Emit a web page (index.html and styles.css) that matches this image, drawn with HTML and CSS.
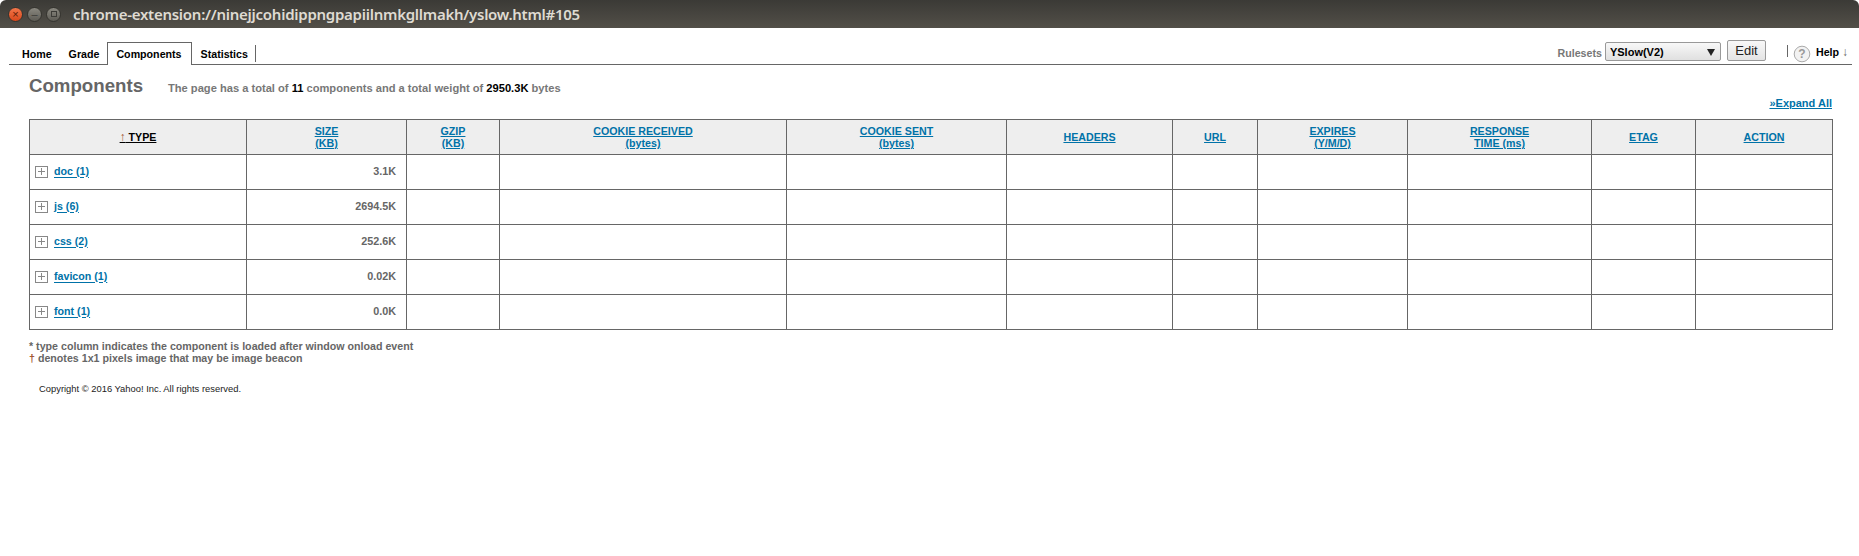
FILE: index.html
```html
<!DOCTYPE html>
<html lang="en">

<head>
    <meta charset="UTF-8">
    <link rel="stylesheet" href="styles.css">
    <title>YSlow</title>
</head>

<body>
    <header class="titlebar">
        <div class="win-buttons">
            <span class="win-btn win-close">×</span>
            <span class="win-btn win-min">–</span>
            <span class="win-btn win-max"><span class="max-box"></span></span>
        </div>
        <div class="win-title">chrome-extension://ninejjcohidippngpapiilnmkgllmakh/yslow.html#105</div>
    </header>

    <nav class="toolbar">
        <ul class="tabs">
            <li class="tab tab-home">Home</li>
            <li class="tab tab-grade">Grade</li>
            <li class="tab tab-active">Components</li>
            <li class="tab tab-last">Statistics</li>
        </ul>
        <div class="tools">
            <span class="rulesets-label">Rulesets</span>
            <div class="select-wrap">
                <select class="rulesets">
                    <option>YSlow(V2)</option>
                </select>
            </div>
            <button class="edit-btn" type="button">Edit</button>
            <span class="tools-sep"></span>
            <svg class="help-icon" width="18" height="18" viewBox="0 0 18 18">
                <circle cx="9" cy="9" r="7.8" fill="#f2f2f2" stroke="#aaa" stroke-width="1"></circle>
                <text x="9" y="13" text-anchor="middle" class="help-q">?</text>
            </svg>
            <span class="help-text">Help <span class="help-arrow">↓</span></span>
        </div>
    </nav>

    <main class="content">
        <div class="summary">
            <h1>Components</h1>
            <p>The page has a total of <b>11</b> components and a total weight of <b>2950.3K</b> bytes</p>
        </div>
        <div class="expand-row"><a href="#">»Expand All</a></div>

        <table class="components">
            <colgroup>
                <col class="c-type"><col class="c-size"><col class="c-gzip"><col class="c-crecv">
                <col class="c-csent"><col class="c-headers"><col class="c-url"><col class="c-expires">
                <col class="c-resp"><col class="c-etag"><col class="c-action">
            </colgroup>
            <thead>
                <tr>
                    <th><a href="#" class="sorted"><span class="sort-arrow">↑</span> TYPE</a></th>
                    <th><a href="#">SIZE<br>(KB)</a></th>
                    <th><a href="#">GZIP<br>(KB)</a></th>
                    <th><a href="#">COOKIE RECEIVED<br>(bytes)</a></th>
                    <th><a href="#">COOKIE SENT<br>(bytes)</a></th>
                    <th><a href="#">HEADERS</a></th>
                    <th><a href="#">URL</a></th>
                    <th><a href="#">EXPIRES<br>(Y/M/D)</a></th>
                    <th><a href="#">RESPONSE<br>TIME (ms)</a></th>
                    <th><a href="#">ETAG</a></th>
                    <th><a href="#">ACTION</a></th>
                </tr>
            </thead>
            <tbody>
                <tr>
                    <td class="type"><span class="plus"></span><a href="#">doc (1)</a></td>
                    <td class="size">3.1K</td>
                    <td></td><td></td><td></td><td></td><td></td><td></td><td></td><td></td><td></td>
                </tr>
                <tr>
                    <td class="type"><span class="plus"></span><a href="#">js (6)</a></td>
                    <td class="size">2694.5K</td>
                    <td></td><td></td><td></td><td></td><td></td><td></td><td></td><td></td><td></td>
                </tr>
                <tr>
                    <td class="type"><span class="plus"></span><a href="#">css (2)</a></td>
                    <td class="size">252.6K</td>
                    <td></td><td></td><td></td><td></td><td></td><td></td><td></td><td></td><td></td>
                </tr>
                <tr>
                    <td class="type"><span class="plus"></span><a href="#">favicon (1)</a></td>
                    <td class="size">0.02K</td>
                    <td></td><td></td><td></td><td></td><td></td><td></td><td></td><td></td><td></td>
                </tr>
                <tr>
                    <td class="type"><span class="plus"></span><a href="#">font (1)</a></td>
                    <td class="size">0.0K</td>
                    <td></td><td></td><td></td><td></td><td></td><td></td><td></td><td></td><td></td>
                </tr>
            </tbody>
        </table>

        <div class="notes">
            <div>* type column indicates the component is loaded after window onload event</div>
            <div><span class="dagger">†</span> denotes 1x1 pixels image that may be image beacon</div>
        </div>
        <div class="copyright">Copyright © 2016 Yahoo! Inc. All rights reserved.</div>
    </main>
</body>

</html>
```
FILE: styles.css
```css
* {
    box-sizing: border-box;
    margin: 0;
    padding: 0;
}

body {
    height: 556px;
    overflow: hidden;
    background-color: #fff;
    font-family: "Liberation Sans", Arial, sans-serif;
    font-size: 10.67px;
    color: #666;
}

a {
    color: #0072a8;
}

.titlebar {
    display: flex;
    align-items: center;
    height: 28px;
    padding-left: 8px;
    background: linear-gradient(#3b3a36, #524f48);
    border-radius: 6px 6px 0 0;
}

.win-buttons {
    display: flex;
    gap: 4px;
    width: 65px;
}

.win-btn {
    display: flex;
    justify-content: center;
    align-items: center;
    width: 15px;
    height: 15px;
    border-radius: 50%;
    font-size: 11px;
    line-height: 1;
    color: #3c3b37;
    background: linear-gradient(#8a8880, #5d5b54);
    border: 1px solid #35342f;
}

.win-close {
    background: linear-gradient(#f2764a, #d8481b);
    color: #5a1d08;
}

.max-box {
    width: 6px;
    height: 6px;
    border: 1px solid #3c3b37;
}

.win-title {
    font-family: "Noto Sans", sans-serif;
    font-size: 15px;
    font-weight: 600;
    letter-spacing: -0.26px;
    color: #dfdbd2;
}

.toolbar {
    display: flex;
    justify-content: space-between;
    height: 37px;
    margin: 0 7px 0 9px;
    border-bottom: 1px solid #666;
}

.tabs {
    display: flex;
    list-style: none;
    height: 23px;
    margin-top: 14px;
}

.tab {
    padding: 6px 9px 0 9px;
    font-weight: bold;
    color: #000;
}

.tab-home {
    padding-left: 13px;
    padding-right: 8px;
}

.tab-grade {
    padding-right: 8px;
}

.tab-active {
    height: 23px;
    background-color: #fff;
    border: 1px solid #666;
    border-bottom: none;
    padding: 5px 9px 0 8px;
}

.tab-last {
    height: 17px;
    margin-top: 3px;
    padding-top: 3px;
    border-right: 1px solid #666;
    padding-right: 7px;
}

.tools {
    display: flex;
    align-items: flex-start;
}

.rulesets-label {
    margin: 19px 3px 0 0;
    font-weight: bold;
    color: #777;
}

.select-wrap {
    position: relative;
    margin-top: 14px;
}

.select-wrap::after {
    content: "";
    position: absolute;
    top: 7px;
    right: 6px;
    border-left: 4px solid transparent;
    border-right: 4px solid transparent;
    border-top: 7px solid #222;
    pointer-events: none;
}

.rulesets {
    appearance: none;
    display: block;
    width: 116px;
    height: 19px;
    padding-left: 4px;
    border: 1px solid #999;
    border-radius: 2px;
    background: linear-gradient(#f8f8f8, #e0e0e0);
    font-family: "Liberation Sans", Arial, sans-serif;
    font-size: 11px;
    font-weight: bold;
    color: #000;
}

.edit-btn {
    width: 39px;
    height: 21px;
    margin: 12px 0 0 6px;
    border: 1px solid #999;
    border-radius: 2px;
    background: linear-gradient(#f8f8f8, #e4e4e4);
    font-family: "Liberation Sans", Arial, sans-serif;
    font-size: 13px;
    color: #222;
}

.tools-sep {
    width: 1px;
    height: 12px;
    margin: 17px 5px 0 21px;
    background-color: #666;
}

.help-icon {
    margin: 17px 5px 0 0;
}

.help-q {
    font-family: "Liberation Sans", Arial, sans-serif;
    font-size: 12px;
    font-weight: bold;
    fill: #999;
}

.help-text {
    margin: 17px 4px 0 0;
    font-weight: bold;
    color: #000;
}

.help-arrow {
    font-size: 12px;
    font-weight: normal;
    color: #666;
}

.content {
    padding: 0 27px 0 29px;
}

.summary {
    display: flex;
    align-items: baseline;
    height: 27px;
    padding-top: 10px;
}

.summary h1 {
    width: 139px;
    font-size: 18.67px;
    font-weight: bold;
    color: #666;
}

.summary p {
    font-size: 11.13px;
    font-weight: bold;
    color: #777;
}

.summary b {
    color: #000;
}

.expand-row {
    height: 27px;
    padding-top: 5px;
    text-align: right;
    font-size: 11px;
    font-weight: bold;
}

.components {
    width: 1803px;
    table-layout: fixed;
    border-collapse: collapse;
    margin-bottom: 10px;
}

.components th,
.components td {
    border: 1px solid #666;
}

.components th {
    height: 35px;
    text-align: center;
    font-size: 10.67px;
    line-height: 12px;
    background-color: #eee;
}

.components td {
    height: 35px;
    padding-bottom: 2px;
    font-weight: bold;
}

.c-type { width: 217px; }
.c-size { width: 160px; }
.c-gzip { width: 93px; }
.c-crecv { width: 287px; }
.c-csent { width: 220px; }
.c-headers { width: 166px; }
.c-url { width: 85px; }
.c-expires { width: 150px; }
.c-resp { width: 184px; }
.c-etag { width: 104px; }
.c-action { width: 137px; }

.sorted {
    color: #000;
}

.sort-arrow {
    font-size: 12px;
    font-weight: normal;
    color: #a0522d;
}

.type {
    padding-left: 5px;
}

.type a {
    vertical-align: middle;
}

.plus {
    display: inline-block;
    vertical-align: middle;
    width: 13px;
    height: 12px;
    margin-right: 6px;
    border: 1px solid #888;
    background:
        linear-gradient(#888, #888) center / 7px 1px no-repeat,
        linear-gradient(#888, #888) center / 1px 7px no-repeat;
}

.size {
    padding-right: 10px;
    text-align: right;
    font-size: 10.8px;
}

.notes {
    font-weight: bold;
    line-height: 12px;
}

.dagger {
    color: #a0522d;
}

.copyright {
    margin: 19px 0 0 10px;
    font-size: 9.4px;
    color: #222;
}
```
